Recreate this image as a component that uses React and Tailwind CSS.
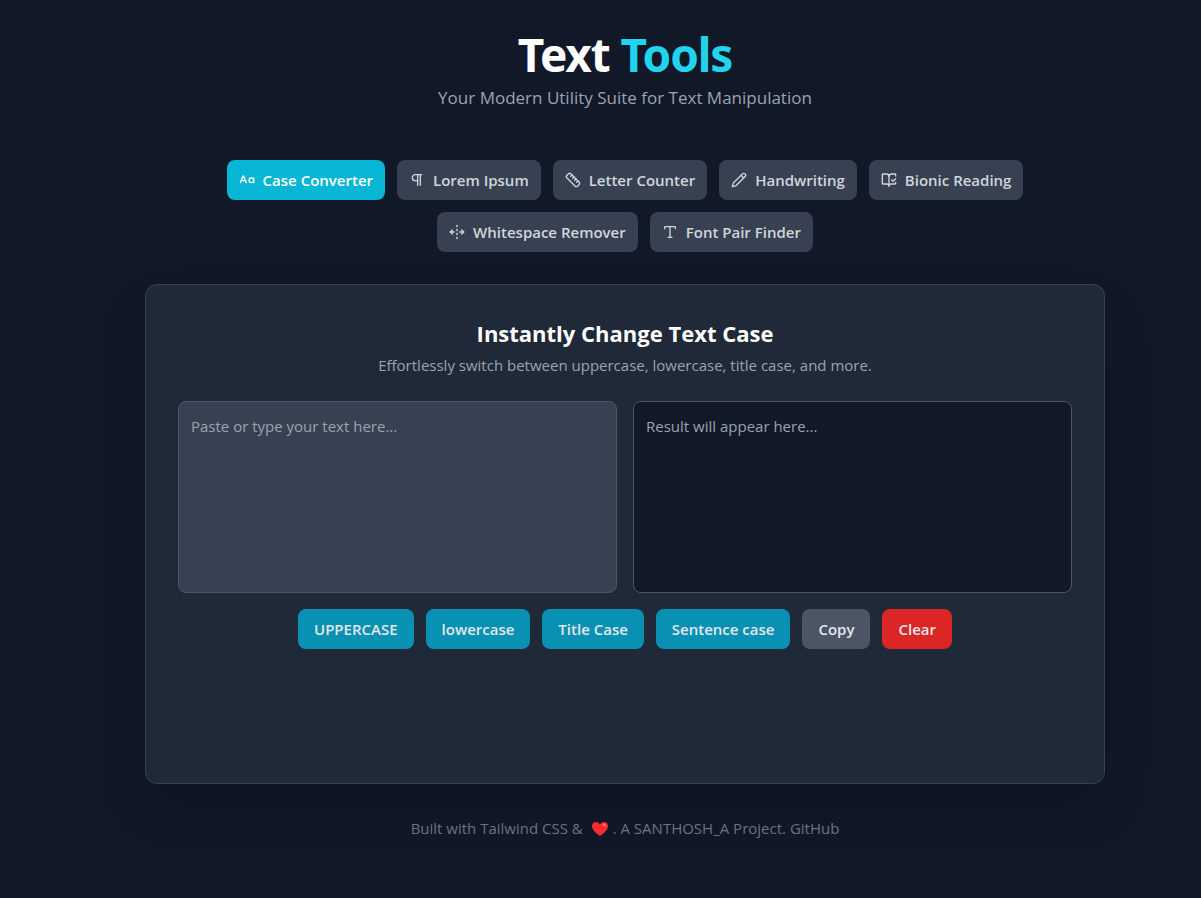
import React, { useState } from "react";
import {
  CaseSensitive,
  Pilcrow,
  Ruler,
  Pencil,
  BookOpenCheck,
  UnfoldHorizontal,
  Type,
} from "lucide-react";

const tools = [
  { label: "Case Converter", icon: CaseSensitive },
  { label: "Lorem Ipsum", icon: Pilcrow },
  { label: "Letter Counter", icon: Ruler },
  { label: "Handwriting", icon: Pencil },
  { label: "Bionic Reading", icon: BookOpenCheck },
  { label: "Whitespace Remover", icon: UnfoldHorizontal },
  { label: "Font Pair Finder", icon: Type },
];

const converters = [
  { label: "UPPERCASE", run: (t) => t.toUpperCase() },
  { label: "lowercase", run: (t) => t.toLowerCase() },
  {
    label: "Title Case",
    run: (t) => t.toLowerCase().replace(/\b\w/g, (c) => c.toUpperCase()),
  },
  {
    label: "Sentence case",
    run: (t) => t.toLowerCase().replace(/(^\s*\w|[.!?]\s+\w)/g, (c) => c.toUpperCase()),
  },
];

function ToolTab({ icon: Icon, label, active, onSelect }) {
  const tone = active ? "bg-[#06b6d4] text-white" : "bg-[#374151] text-[#d1d5db]";
  return (
    <button
      type="button"
      onClick={onSelect}
      className={`flex h-10 items-center gap-2 rounded-lg px-3 font-semibold ${tone}`}
    >
      <Icon size={16} strokeWidth={2} aria-hidden="true" />
      {label}
    </button>
  );
}

function ActionButton({ tone, onClick, children }) {
  return (
    <button
      type="button"
      onClick={onClick}
      className={`h-10 rounded-lg px-4 font-semibold text-[#e5e7eb] ${tone}`}
    >
      {children}
    </button>
  );
}

function Heart() {
  return (
    <svg viewBox="0 0 18 16" className="mx-1 inline-block h-4 w-[18px] align-[-3px]" role="img" aria-label="love">
      <path
        d="M9 15.2C7.200 13.300 1 9.600 1 5.200C1 2.600 2.800 1 5 1C6.800 1 8.200 2 9 3.500C9.800 2 11.200 1 13 1C15.200 1 17 2.600 17 5.200C17 9.600 10.800 13.300 9 15.200Z"
        fill="#fc2b2e"
      />
      <ellipse cx="13.300" cy="4" rx="1.900" ry="1.300" fill="#ff7a70" transform="rotate(35 13.300 4)" />
    </svg>
  );
}

export default function App() {
  const [activeTool, setActiveTool] = useState(tools[0].label);
  const [text, setText] = useState("");
  const [result, setResult] = useState("");

  return (
    <div className="min-h-screen bg-[#111827] py-8 pl-[49px] font-['Open_Sans','Noto_Sans',sans-serif] text-[15px] leading-6 text-[#d1d5db]">
      <div className="mx-auto max-w-[960px]">
        <header className="mb-12 text-center">
          <h1 className="mb-2 font-['Noto_Sans',sans-serif] text-[46px] leading-11 font-bold tracking-tight text-white">
            Text <span className="text-[#22d3ee]">Tools</span>
          </h1>
          <p className="text-[17px] leading-7 text-[#9ca3af]">
            Your Modern Utility Suite for Text Manipulation
          </p>
        </header>

        <nav className="mb-8 flex flex-wrap justify-center gap-3">
          {tools.map((tool) => (
            <ToolTab
              key={tool.label}
              icon={tool.icon}
              label={tool.label}
              active={tool.label === activeTool}
              onSelect={() => setActiveTool(tool.label)}
            />
          ))}
        </nav>

        <main className="min-h-[500px] rounded-xl border border-[#374151] bg-[#1f2937] p-8 shadow-2xl">
          <div className="mb-6 text-center">
            <h2 className="mb-1 text-[22px] leading-8 font-bold text-white">
              Instantly Change Text Case
            </h2>
            <p className="text-[#9ca3af]">
              Effortlessly switch between uppercase, lowercase, title case, and more.
            </p>
          </div>

          <div className="mb-4 grid gap-4 md:grid-cols-2">
            <textarea
              aria-label="Text to convert"
              placeholder="Paste or type your text here..."
              value={text}
              onChange={(e) => setText(e.target.value)}
              className="h-48 w-full resize-none rounded-lg border border-[#4b5563] bg-[#374151] p-3 placeholder:text-[#9ca3af]"
            />
            <textarea
              aria-label="Converted text"
              placeholder="Result will appear here..."
              value={result}
              readOnly
              className="h-48 w-full resize-none rounded-lg border border-[#4b5563] bg-[#111827] p-3 placeholder:text-[#9ca3af]"
            />
          </div>

          <div className="flex flex-wrap justify-center gap-3">
            {converters.map((c) => (
              <ActionButton key={c.label} tone="bg-[#0891b2]" onClick={() => setResult(c.run(text))}>
                {c.label}
              </ActionButton>
            ))}
            <ActionButton tone="bg-[#4b5563]" onClick={() => navigator.clipboard?.writeText(result)}>
              Copy
            </ActionButton>
            <ActionButton
              tone="bg-[#dc2626]"
              onClick={() => {
                setText("");
                setResult("");
              }}
            >
              Clear
            </ActionButton>
          </div>
        </main>

        <footer className="mt-8 text-center text-[#6b7280]">
          Built with Tailwind CSS &amp; <Heart />. A SANTHOSH_A Project.{" "}
          <a href="#github">GitHub</a>
        </footer>
      </div>
    </div>
  );
}
